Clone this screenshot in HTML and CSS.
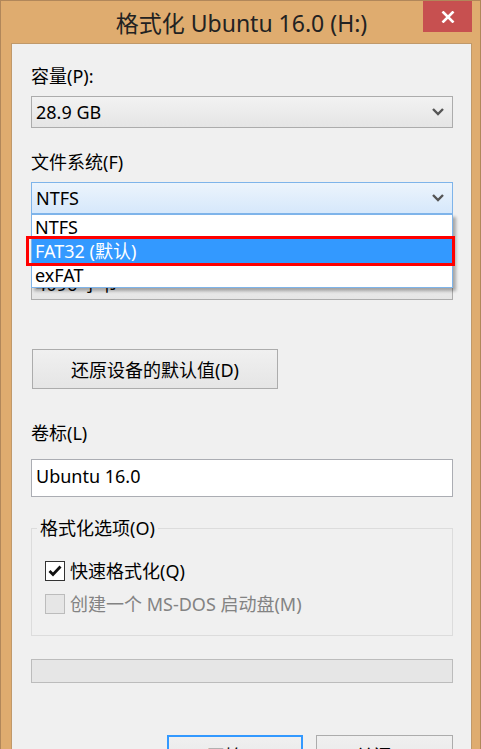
FILE: index.html
```html
<!DOCTYPE html>
<html lang="zh-CN">
<head>
  <meta charset="UTF-8" />
  <meta name="viewport" content="width=device-width, initial-scale=1.0" />
  <title>格式化 Ubuntu 16.0 (H:)</title>
  <link rel="stylesheet" href="styles.css">
</head>

<body>
  <div class="window">
    <div class="titlebar">
      <span class="title">格式化 Ubuntu 16.0 (H:)</span>
      <button class="close" type="button">
        <svg width="14" height="12" viewBox="0 0 14 12">
          <path d="M1.5 0.5 L12.5 11.5 M12.5 0.5 L1.5 11.5" stroke="#fff" stroke-width="2.6" fill="none" />
        </svg>
      </button>
    </div>

    <div class="client">
      <label class="field-label first">容量(P):</label>
      <div class="combo">
        <span>28.9 GB</span>
        <svg class="chevron" width="12" height="8" viewBox="0 0 12 8">
          <polyline points="1,1 6,6 11,1" stroke="#555" stroke-width="2.4" fill="none" />
        </svg>
      </div>

      <label class="field-label">文件系统(F)</label>
      <div class="combo-wrap">
        <div class="combo focused">
          <span>NTFS</span>
          <svg class="chevron" width="12" height="8" viewBox="0 0 12 8">
            <polyline points="1,1 6,6 11,1" stroke="#555" stroke-width="2.4" fill="none" />
          </svg>
        </div>
        <ul class="dropdown">
          <li>NTFS</li>
          <li class="selected">FAT32 (默认)</li>
          <li>exFAT</li>
        </ul>
      </div>

      <label class="field-label">分配单元大小(A)</label>
      <div class="combo">
        <span>4096 字节</span>
        <svg class="chevron" width="12" height="8" viewBox="0 0 12 8">
          <polyline points="1,1 6,6 11,1" stroke="#555" stroke-width="2.4" fill="none" />
        </svg>
      </div>

      <button class="btn restore" type="button">还原设备的默认值(D)</button>

      <label class="field-label volume">卷标(L)</label>
      <div class="textbox">Ubuntu 16.0</div>

      <fieldset class="options">
        <legend>格式化选项(O)</legend>
        <div class="check-row">
          <span class="checkbox">
            <svg width="14" height="12" viewBox="0 0 14 12">
              <polyline points="1.5,6 5,9.5 12.5,1.5" stroke="#111" stroke-width="2.8" fill="none" />
            </svg>
          </span>
          快速格式化(Q)
        </div>
        <div class="check-row disabled">
          <span class="checkbox"></span>
          创建一个 MS-DOS 启动盘(M)
        </div>
      </fieldset>

      <div class="progress"></div>

      <div class="actions">
        <button class="btn start" type="button">开始(S)</button>
        <button class="btn cancel" type="button">关闭(C)</button>
      </div>
    </div>
  </div>
</body>
</html>
```

FILE: styles.css
```css
html, body {
  margin: 0;
  padding: 0;
  height: 100%;
  overflow: hidden;
}

body {
  background: #dfac6f;
  font-family: "Noto Sans", "Noto Sans CJK SC", sans-serif;
  color: #000;
}

.window {
  position: relative;
  border: 1px solid #b1875a;
  background: #dfac6f;
  padding: 0 8px 0 10px;
  min-height: 900px;
}

.titlebar {
  height: 42px;
  display: flex;
  align-items: center;
  justify-content: center;
}

.title {
  font-size: 23px;
  color: #222;
  line-height: 42px;
  margin-top: 1px;
}

.close {
  position: absolute;
  top: 0;
  right: 8px;
  width: 49px;
  height: 31px;
  border: none;
  padding: 0;
  background: #c75050;
  display: flex;
  align-items: center;
  justify-content: center;
}

.client {
  background: #f0f0f0;
  border: 1px solid #c0996a;
  padding: 20px 18px 0 19px;
  min-height: 840px;
  font-size: 18px;
}

.field-label {
  display: block;
  line-height: 24px;
  margin-top: 22px;
}

.field-label.first {
  margin-top: 0;
}

.combo {
  box-sizing: border-box;
  height: 32px;
  margin-top: 8px;
  border: 1px solid #acacac;
  background: linear-gradient(#f2f2f2, #e5e5e5);
  display: flex;
  align-items: center;
  justify-content: space-between;
  padding: 0 8px 0 4px;
  line-height: 24px;
}

.combo.focused {
  border-color: #7eb4ea;
  background: linear-gradient(#ecf4fc, #d6e8fb);
}

.combo-wrap {
  position: relative;
  z-index: 2;
}

.dropdown {
  position: absolute;
  top: 100%;
  left: 0;
  right: 0;
  margin: 0;
  padding: 0;
  list-style: none;
  background: #fff;
  border: 1px solid #7eb4ea;
  box-shadow: 3px 3px 3px rgba(0, 0, 0, 0.3);
}

.dropdown li {
  position: relative;
  height: 24px;
  line-height: 24px;
  padding-left: 3px;
}

.dropdown li.selected {
  background: #3399ff;
  color: #fff;
}

.dropdown li.selected::after {
  content: "";
  position: absolute;
  top: -3px;
  bottom: -3px;
  left: -6px;
  right: -3px;
  border: 3px solid #ff0000;
}

.btn {
  box-sizing: border-box;
  height: 40px;
  border: 1px solid #acacac;
  background: linear-gradient(#f0f0f0, #e5e5e5);
  font-family: inherit;
  font-size: 18px;
  color: #000;
  padding: 0;
}

.restore {
  display: block;
  width: 246px;
  margin: 49px 0 0 1px;
}

.field-label.volume {
  margin-top: 32px;
}

.textbox {
  box-sizing: border-box;
  height: 38px;
  margin-top: 14px;
  background: #fff;
  border: 1px solid #abadb3;
  padding: 4px 4px 0;
  line-height: 24px;
}

.options {
  margin: 20px 0 0;
  padding: 20px 18px 19px 13px;
  border: 1px solid #dcdcdc;
}

.options legend {
  margin-left: -8px;
  padding: 0 3px;
  line-height: 22px;
}

.check-row {
  display: flex;
  align-items: center;
  height: 24px;
  line-height: 24px;
}

.check-row + .check-row {
  margin-top: 9px;
}

.checkbox {
  box-sizing: border-box;
  width: 20px;
  height: 20px;
  border: 1px solid #333;
  background: #fff;
  margin-right: 5px;
  display: flex;
  align-items: center;
  justify-content: center;
}

.check-row.disabled {
  color: #838383;
}

.check-row.disabled .checkbox {
  border-color: #bcbcbc;
  background: #e6e6e6;
}

.progress {
  box-sizing: border-box;
  height: 24px;
  margin-top: 23px;
  border: 1px solid #bcbcbc;
  background: #e6e6e6;
}

.actions {
  display: flex;
  justify-content: flex-end;
  gap: 13px;
  margin-top: 52px;
}

.start {
  width: 136px;
  border: 2px solid #3399ff;
}

.cancel {
  width: 137px;
}
```
